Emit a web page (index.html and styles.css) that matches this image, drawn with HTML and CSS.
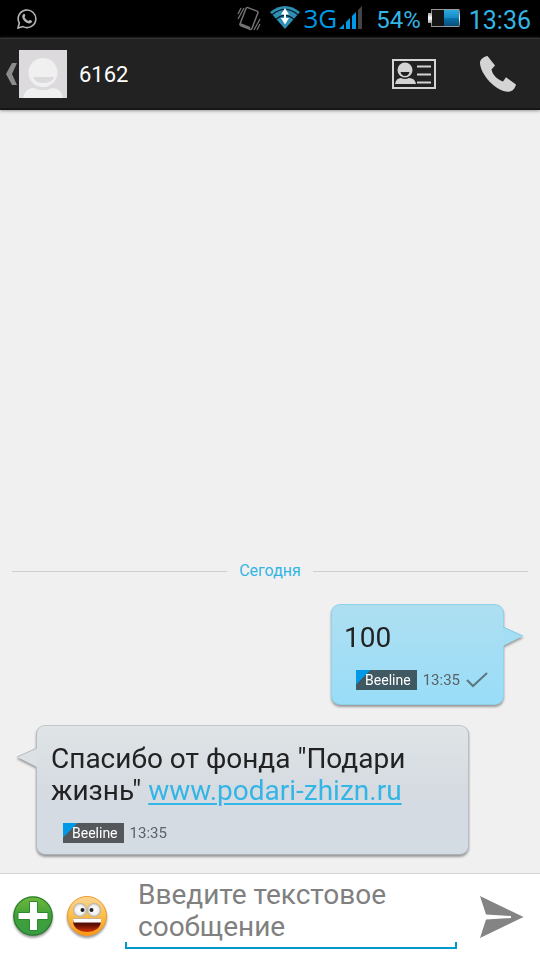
FILE: index.html
```html
<!DOCTYPE html>
<html lang="ru">
<head>
<meta charset="utf-8">
<meta name="viewport" content="width=device-width, initial-scale=1">
<title>6162</title>
<link rel="stylesheet" href="styles.css">
</head>
<body>
<div class="status">
  <svg class="status-app" width="20" height="20" viewBox="0 0 20 20" fill="none" stroke="#b4b4b4"><path d="M1 19l1.300-5A8.800 8.800 0 1 1 6 17.600z" stroke-width="1.600"/><path d="M6.300 5.200c.8-.8 1.400-.4 1.800.9.300.8.200 1.100-.6 1.900.8 1.800 2 3 4 4 .9-1 1.100-1.300 1.800-.9 1.700.8 2 1 1.500 2-1 1.900-3.200 1.600-5.200.6C7 12.300 5 9.300 5.200 7.200c.1-.9.500-1.500 1.100-2z" fill="#b4b4b4" stroke="none"/></svg>
  <svg width="24" height="28" viewBox="0 0 24 28" fill="none" stroke="#747474"><path d="M9 3.500c.3-.9 1-1.200 1.800-.9l9.200 3.500c.9.400 1.200 1 .9 1.800l-6 15.500c-.4.900-1 1.200-1.800.9l-9.200-3.600c-.9-.4-1.200-1-.9-1.800z" stroke-width="1.500"/><path d="M3 19l10 4" stroke-width="2"/><path d="M1 9l3-6M1 14l6-11M17 25l6-11M20 25l3-6" stroke-width="1.300"/></svg>
  <svg class="wifi" width="30" height="23" viewBox="0 0 30 23"><path d="M0 6Q15-6 30 6L15 23z" fill="#2f8fb4"/><path d="M2 8.700Q15-2 28 8.700M6 13.200Q15 5.500 24 13.200" fill="none" stroke="#04222f" stroke-width="1.200"/><path d="M15 2l4 6.500h-8zM11 12h8l-4 6.500z" fill="#fff"/><path d="M14 8h2v5h-2z" fill="#fff"/></svg>
  <span class="network">3G</span>
  <svg class="signal" width="24" height="24" viewBox="0 0 24 24"><path d="M0 23l5-5v5zM7 16l4-4v11H7zM13 10l4-4v17h-4z" fill="#0099e5"/><path d="M19 4l4-4v23h-4z" fill="#444"/></svg>
  <span class="percent">54%</span>
  <svg class="battery" width="32" height="20" viewBox="0 0 32 20">
    <defs><linearGradient id="charge" x1="0" y1="0" x2="0" y2="1"><stop stop-color="#2caadf"/><stop offset=".48" stop-color="#168bc7"/><stop offset=".5" stop-color="#0874ac"/><stop offset="1" stop-color="#064f78"/></linearGradient><linearGradient id="cap" x1="0" y1="0" x2="0" y2="1"><stop stop-color="#555"/><stop offset=".5" stop-color="#fff"/><stop offset="1" stop-color="#555"/></linearGradient></defs>
    <path d="M0 5h3V1h28q1 0 1 2v14q0 2-1 2H3v-4H0z" fill="url(#cap)"/><path d="M4 2h27v16H4z" fill="#151515"/><path d="M16 2h15v16H16z" fill="url(#charge)"/><path d="M3 1.500h28M3 18.500h28" stroke="#999"/>
  </svg>
  <time class="clock">13:36</time>
</div>

<header class="bar">
  <button class="back" aria-label="Назад">
    <svg width="12" height="22" viewBox="0 0 12 22"><path d="M6 0h5L6 11l5 11H6L0 11z" fill="#8c8c8c"/></svg>
    <svg width="48" height="48" viewBox="0 0 48 48"><path d="M0 0h48v48H0z" fill="#dcdadd"/><path d="M4 48c1-6 5-10 11-10 6 3 12 3 18 0 6 0 10 4 11 10z" fill="#f0f0f0"/><circle cx="24" cy="22.500" r="14.500" fill="#f0f0f0"/><path d="M14 27h21q-2 6-10.500 6T14 27z" fill="#dcdadd"/></svg>
  </button>
  <h1 class="title">6162</h1>
  <button class="tool" aria-label="Контакт">
    <svg width="44" height="30" viewBox="0 0 44 30"><path d="M1 1h42v28H1z" fill="none" stroke="#d4d4d4" stroke-width="2"/><circle cx="13" cy="11" r="7.500" fill="#d4d4d4"/><path d="M8.500 13h9q-1 4-4.500 4t-4.500-4z" fill="#222"/><path d="M3 25q1-6 6-6 4 2 8 0 6 0 7 6z" fill="#d4d4d4"/><path d="M25 7.500h14M25 15.500h14M25 23.500h14" stroke="#d4d4d4" stroke-width="2"/></svg>
  </button>
  <button class="tool" aria-label="Позвонить">
    <svg width="36" height="36" viewBox="0 0 36 36"><path d="M7.500 0L15 9.500l-3.500 4c1 5 5 9.500 11.500 12l3-4.200L36 28.500c-1 4-3.500 7-7.500 7.300C16 36 0 18 0 6.500 0 3.500 4 .5 7.500 0z" fill="#d4d4d4"/></svg>
  </button>
</header>

<main class="chat">
  <div class="day"><span>Сегодня</span></div>
  <article class="bubble out">
    <svg class="tail" width="21" height="21" viewBox="0 0 21 21"><path d="M0 1l20 9L0 20z" fill="#a4def4"/><path d="M0 1l20 9" stroke="#7fcbe6"/></svg>
    <p class="text">100</p>
    <div class="meta"><span class="sim">Beeline</span><time>13:35</time><svg class="tick" width="22" height="16" viewBox="0 0 22 16"><path d="M1 8l6 6L21 1" fill="none" stroke="#5d7780" stroke-width="2"/></svg></div>
  </article>
  <article class="bubble in">
    <svg class="tail" width="21" height="21" viewBox="0 0 21 21"><path d="M21 1L1 10l20 10z" fill="#dce1e5"/><path d="M21 1L1 10" stroke="#b4bbc0"/></svg>
    <p class="text">Спасибо от фонда "Подари жизнь" <a href="#">www.podari-zhizn.ru</a></p>
    <div class="meta"><span class="sim">Beeline</span><time>13:35</time></div>
  </article>
</main>

<form class="composer">
  <button class="round" type="button" aria-label="Вложить">
    <svg width="42" height="44" viewBox="0 0 42 44"><defs><linearGradient id="green" x1="0" y1="0" x2="0" y2="1"><stop stop-color="#70b83c"/><stop offset=".5" stop-color="#3fa137"/><stop offset="1" stop-color="#3b9b45"/></linearGradient></defs><circle cx="21" cy="24" r="19.200" fill="url(#green)" stroke="#237c28" stroke-width="1.200"/><path d="M17.500 9.500h8v11H36v7H25.500v11h-8v-11H6v-7h11.500z" fill="#fff" stroke="#2c8831"/></svg>
  </button>
  <button class="round" type="button" aria-label="Смайлики">
    <svg width="42" height="44" viewBox="0 0 42 44"><defs><linearGradient id="face" x1="0" y1="0" x2="0" y2="1"><stop stop-color="#fbd694"/><stop offset=".5" stop-color="#f9bf49"/><stop offset="1" stop-color="#fb9717"/></linearGradient><linearGradient id="mouth" x1="0" y1="0" x2="0" y2="1"><stop stop-color="#320804"/><stop offset=".5" stop-color="#651105"/><stop offset="1" stop-color="#d53500"/></linearGradient><radialGradient id="eye"><stop stop-color="#fff"/><stop offset=".65" stop-color="#f1f1f1"/><stop offset="1" stop-color="#b3aaa0"/></radialGradient></defs><g transform="translate(0 3)"><circle cx="21" cy="21" r="19.500" fill="url(#face)" stroke="#f0992a"/><circle cx="14" cy="15" r="7" fill="url(#eye)"/><circle cx="28" cy="15" r="7" fill="url(#eye)"/><circle cx="16.500" cy="15" r="2" fill="#222"/><circle cx="25.500" cy="15" r="2" fill="#222"/><path d="M7 23.500h28c1 9-6 13.500-14 13.500S6 32.500 7 23.500z" fill="url(#mouth)"/><path d="M7 23.500h28v4H7.500z" fill="#fff"/></g></svg>
  </button>
  <div class="field"><textarea rows="2" aria-label="Сообщение" placeholder="Введите текстовое сообщение"></textarea></div>
  <button class="send" type="submit" aria-label="Отправить">
    <svg width="44" height="48" viewBox="0 0 44 48"><path d="M0 6l43.500 21L0 48l6-18.500L31 28v-2L6 24.500z" fill="#848484"/></svg>
  </button>
</form>
</body>
</html>
```
FILE: styles.css
```css
* {
  box-sizing: border-box;
}

body {
  display: flex;
  flex-direction: column;
  min-height: 100vh;
  margin: 0;
  background: #f0f0f0;
  color: #222;
  font-family: Roboto, "Noto Sans", sans-serif;
}

svg {
  display: block;
  flex: none;
}

button {
  display: flex;
  align-items: center;
  justify-content: center;
  padding: 0;
  border: 0;
  background: none;
}

.status {
  display: flex;
  align-items: center;
  height: 38px;
  padding: 0 9px 0 17px;
  background: #000;
  color: #33b5e5;
  font-size: 25px;
}

.status-app {
  margin-right: auto;
}

.wifi {
  margin: 0 3px 4px 9px;
}

.network {
  padding-bottom: 2px;
  color: #0099e5;
  font-family: "Open Sans", sans-serif;
  font-size: 26px;
  line-height: 36px;
}

.signal {
  margin: 0 13px 2px 2px;
}

.percent {
  padding-top: 2px;
  font-size: 24px;
}

.battery {
  margin: 0 9px 2px 7px;
}

.clock {
  padding-top: 2px;
}

.bar {
  display: flex;
  align-items: center;
  height: 72px;
  padding: 0 0 0 6px;
  border-top: 1px solid #343434;
  border-bottom: 2px solid #161616;
  background: #222;
  box-shadow: 0 1px 3px #999;
}

.back {
  gap: 1px;
}

.title {
  margin: 0 auto 0 12px;
  padding-top: 2px;
  color: #fff;
  font-size: 22px;
  font-weight: 400;
}

.tool {
  width: 84px;
  height: 68px;
}

.chat {
  display: flex;
  flex: 1;
  flex-direction: column;
  justify-content: flex-end;
  padding: 20px 12px 18px;
}

.day {
  display: flex;
  align-items: center;
  gap: 12px;
  margin-bottom: 23px;
  color: #33b5e5;
  font-size: 16px;
  line-height: 20px;
}

.day::before,
.day::after {
  flex: 1;
  height: 1px;
  background: #cfcfcf;
  content: "";
}

.bubble {
  position: relative;
  max-width: 84%;
  border: 1px solid;
  border-radius: 9px;
  filter: drop-shadow(0 2px 1px #999);
}

.out {
  align-self: flex-end;
  margin: 0 24px 20px 0;
  padding: 17px 15px 14px 12px;
  border-color: #8bd2ea #92d3eb #8ed0e8;
  background: linear-gradient(#aedff1, #99ddf8);
}

.in {
  align-self: flex-start;
  margin-left: 24px;
  padding: 17px 56px 11px 14px;
  border-color: #c1c6ca #b6bdc3 #aab1b8;
  background: linear-gradient(#dfe4e6, #d6dbe2 50%, #d3dbe3);
}

.tail {
  position: absolute;
  top: 21px;
}

.out .tail {
  left: 100%;
}

.in .tail {
  right: 100%;
}

.text {
  margin: 0 0 16px;
  font-size: 28px;
  line-height: 32px;
}

.text a {
  color: #33b5e5;
  text-decoration-thickness: 2px;
  text-underline-offset: 3px;
}

.meta {
  display: flex;
  align-items: center;
  gap: 6px;
  margin-left: 12px;
  color: #5a6265;
  font-size: 15px;
  line-height: 20px;
}

.sim {
  padding: 0 6px 0 9px;
  background: linear-gradient(135deg, #0099e5 10px, rgba(0, 0, 0, 0.6) 10px);
  color: #fff;
  font-size: 14px;
}

.composer {
  display: flex;
  align-items: center;
  padding: 5px 16px 11px 12px;
  border-top: 1px solid #d4d4d4;
  background: #fff;
}

.round {
  margin-right: 12px;
  filter: drop-shadow(0 2px 1px #999);
}

.field {
  flex: 1;
  margin: 0 23px 0 5px;
  padding: 0 0 4px;
  border-bottom: 2px solid #0099cc;
  background:
    linear-gradient(#0099cc, #0099cc) 0 100% / 2px 5px no-repeat,
    linear-gradient(#0099cc, #0099cc) 100% 100% / 2px 5px no-repeat;
}

.field textarea {
  display: block;
  width: 100%;
  height: 64px;
  padding: 0 13px;
  overflow: hidden;
  border: 0;
  outline: 0;
  background: transparent;
  color: #222;
  font: 28px/32px Roboto, "Noto Sans", sans-serif;
  resize: none;
}

.field textarea::placeholder {
  color: #808080;
  opacity: 1;
}
```
